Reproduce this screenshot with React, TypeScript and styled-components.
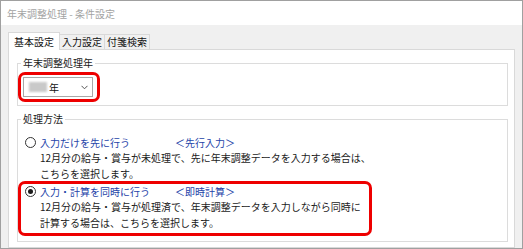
import React from "react";
import styled, { createGlobalStyle } from "styled-components";

const Global = createGlobalStyle`
  html, body { margin: 0; padding: 0; background: #fff; }
  body { font-family: "Noto Sans CJK JP", "Noto Sans", sans-serif; }
  * { box-sizing: border-box; }
`;

const Window = styled.div`
  width: 523px;
  height: 249px;
  border: 1px solid #a0a0a0;
  display: flex;
  flex-direction: column;
  overflow: hidden;
  background: #fff;
`;

const TitleBar = styled.div`
  height: 24px;
  flex: none;
  display: flex;
  align-items: center;
  padding-left: 6px;
  font-size: 10px;
  color: #a3a3a3;
  background: #fff;
`;

const Body = styled.div`
  flex: 1;
  display: flex;
  flex-direction: column;
  background: #f0f0f0;
  padding: 7px 7px 0 7px;
`;

const TabRow = styled.div`
  display: flex;
  align-items: flex-end;
  height: 18px;
  margin-bottom: -1px;
  position: relative;
  z-index: 1;
`;

const Tab = styled.div<{ $active?: boolean }>`
  font-size: 10px;
  line-height: 14px;
  color: #111;
  border: 1px solid #d9d9d9;
  border-bottom: none;
  ${(p) =>
    p.$active
      ? `height: 18px; padding: 2px 5px 1px; background: #fff;`
      : `height: 15px; padding: 0 2px 1px; margin-bottom: 1px; border-left: none; background: #f0f0f0;`}
`;

const Panel = styled.div`
  flex: 1;
  display: flex;
  flex-direction: column;
  background: #fff;
  border: 1px solid #d9d9d9;
  padding: 0 6px 0 8px;
`;

const Group = styled.fieldset<{ $top: number; $bottom: number }>`
  margin: ${(p) => p.$top}px 0 0 0;
  padding: 0 0 ${(p) => p.$bottom}px 0;
  border: 1px solid #dcdcdc;
  min-width: 0;
`;

const Legend = styled.legend`
  font-size: 10px;
  line-height: 12px;
  padding: 0 2px;
  margin-left: 3px;
  color: #1a1a1a;
`;

const GroupContent = styled.div<{ $pt: number }>`
  display: flex;
  flex-direction: column;
  align-items: flex-start;
  padding-top: ${(p) => p.$pt}px;
`;

const Highlight = styled.div<{ $w?: number }>`
  border: 3px solid #ee0000;
  border-radius: 7px;
  ${(p) => (p.$w ? `width: ${p.$w}px;` : "")}
`;

const ComboWrap = styled(Highlight)`
  padding: 2px 4px 2px 2px;
`;

const Combo = styled.div`
  width: 70px;
  height: 20px;
  border: 1px solid #a8a8a8;
  background: #fff;
  display: flex;
  align-items: center;
  padding-left: 5px;
  padding-right: 4px;
  font-size: 10px;
  color: #111;
`;

const Blurred = styled.span`
  width: 18px;
  height: 10px;
  background: #c9c9c9;
  filter: blur(1.2px);
  margin-right: 2px;
`;

const Chevron = styled.svg`
  margin-left: auto;
`;

const OptionBox = styled.div<{ $pl: number }>`
  padding-left: ${(p) => p.$pl}px;
`;

const OptionHighlight = styled(Highlight)`
  margin-top: -1px;
  padding: 0 0 2px 4px;
`;

const Head = styled.div`
  display: flex;
  align-items: center;
  height: 15px;
  font-size: 10px;
  color: #2443a8;
`;

const Radio = styled.span<{ $checked?: boolean }>`
  width: 11px;
  height: 11px;
  border: 1px solid #333;
  border-radius: 50%;
  background: #fff;
  margin-right: 4px;
  display: flex;
  align-items: center;
  justify-content: center;
  &::after {
    content: "";
    width: 5px;
    height: 5px;
    border-radius: 50%;
    background: ${(p) => (p.$checked ? "#1a1a1a" : "transparent")};
  }
`;

const Label = styled.span`
  width: 135px;
`;

const Desc = styled.div`
  padding-left: 15px;
  font-size: 10px;
  line-height: 16px;
  color: #1a1a1a;
  white-space: nowrap;
`;

type Opt = { label: string; tag: string; lines: string[]; checked?: boolean };

const Option = ({ o }: { o: Opt }) => (
  <>
    <Head>
      <Radio $checked={o.checked} />
      <Label>{o.label}</Label>
      <span>{o.tag}</span>
    </Head>
    {o.lines.map((l) => (
      <Desc key={l}>{l}</Desc>
    ))}
  </>
);

const opt1: Opt = {
  label: "入力だけを先に行う",
  tag: "＜先行入力＞",
  lines: ["12月分の給与・賞与が未処理で、先に年末調整データを入力する場合は、", "こちらを選択します。"],
};

const opt2: Opt = {
  label: "入力・計算を同時に行う",
  tag: "＜即時計算＞",
  lines: ["12月分の給与・賞与が処理済で、年末調整データを入力しながら同時に", "計算する場合は、こちらを選択します。"],
  checked: true,
};

export default function App() {
  return (
    <>
      <Global />
      <Window>
        <TitleBar>年末調整処理 - 条件設定</TitleBar>
        <Body>
          <TabRow>
            <Tab $active>基本設定</Tab>
            <Tab>入力設定</Tab>
            <Tab>付箋検索</Tab>
          </TabRow>
          <Panel>
            <Group $top={7} $bottom={3}>
              <Legend>年末調整処理年</Legend>
              <GroupContent $pt={3}>
                <ComboWrap>
                  <Combo>
                    <Blurred />
                    <span>年</span>
                    <Chevron width="7" height="5" viewBox="0 0 7 5">
                      <path d="M0.5 0.8 L3.5 3.8 L6.5 0.8" fill="none" stroke="#555" strokeWidth="1" />
                    </Chevron>
                  </Combo>
                </ComboWrap>
              </GroupContent>
            </Group>
            <Group $top={7} $bottom={5}>
              <Legend>処理方法</Legend>
              <GroupContent $pt={10}>
                <OptionBox $pl={7}>
                  <Option o={opt1} />
                </OptionBox>
                <OptionHighlight $w={354}>
                  <Option o={opt2} />
                </OptionHighlight>
              </GroupContent>
            </Group>
          </Panel>
        </Body>
      </Window>
    </>
  );
}
